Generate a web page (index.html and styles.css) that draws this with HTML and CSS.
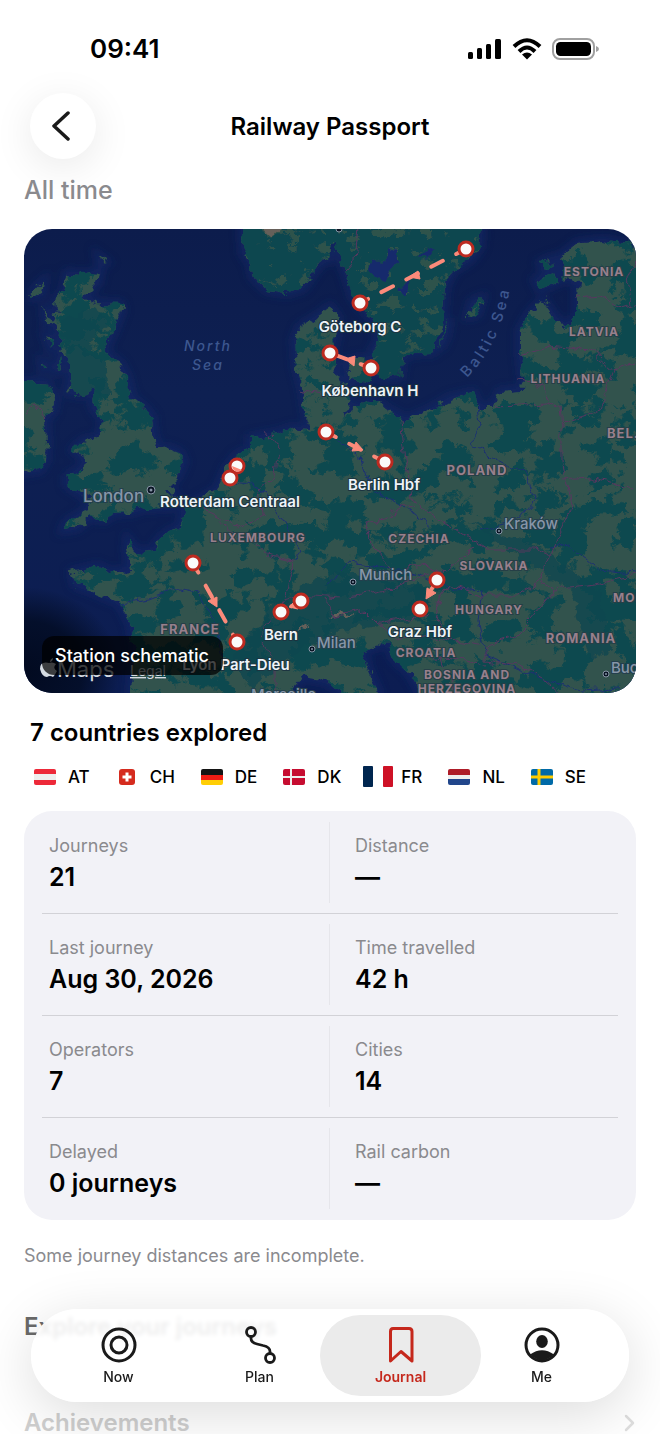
FILE: index.html
```html
<!DOCTYPE html>
<html lang="en">
<head>
<meta charset="utf-8">
<meta name="viewport" content="width=device-width, initial-scale=1">
<title>Railway Passport</title>
<link rel="stylesheet" href="styles.css">
</head>
<body>
<div class="status-bar">
  <time class="clock">09:41</time>
  <div class="status-icons">
    <svg width="34" height="22" viewBox="0 0 34 22" role="img" aria-label="Signal"><rect x="0" y="14" width="5" height="7" rx="1.500"/><rect x="9" y="10" width="5" height="11" rx="1.500"/><rect x="18" y="6" width="5" height="15" rx="1.500"/><rect x="27" y="1" width="6" height="20" rx="1.500"/></svg>
    <svg width="30" height="22" viewBox="0 0 30 22" role="img" aria-label="Wi-Fi"><g fill="none" stroke="#000" stroke-width="4"><path d="M2 8.500Q15-4 28 8.500"/><path d="M7 13.500Q15 5.500 23 13.500"/></g><path d="M15 21.500L10 16.500Q15 12.500 20 16.500Z"/></svg>
    <svg width="47" height="22" viewBox="0 0 47 22" role="img" aria-label="Battery"><rect x="1" y="1" width="41" height="20" rx="7" fill="none" stroke="#a0a0a0" stroke-width="2"/><rect x="4" y="4" width="35" height="14" rx="4.500"/><path d="M44 8q3 1 3 3t-3 3z" fill="#a0a0a0"/></svg>
  </div>
</div>

<header class="header">
  <button class="back" type="button" aria-label="Back"><svg width="20" height="30" viewBox="0 0 20 30"><path d="M17 2L3 15L17 28" fill="none" stroke="#1a1a1a" stroke-width="3.500" stroke-linecap="round" stroke-linejoin="round"/></svg></button>
  <h1>Railway Passport</h1>
</header>

<main class="content">
  <p class="period">All time</p>

  <figure class="map-card">
    <svg class="map" viewBox="24 229 612 464" role="img" aria-label="Map of journeys">
      <defs>
        <linearGradient id="sea" x1="0" y1="0" x2="0" y2="1"><stop offset="0" stop-color="#0c1c4c"/><stop offset=".35" stop-color="#0e2052"/><stop offset="1" stop-color="#0c1d52"/></linearGradient>
        <radialGradient id="deep"><stop offset="0" stop-color="#020a20"/><stop offset=".6" stop-color="#040f2b"/><stop offset="1" stop-color="#040f2b" stop-opacity="0"/></radialGradient>
        <filter id="rough" x="-5%" y="-5%" width="110%" height="110%"><feTurbulence type="fractalNoise" baseFrequency=".09" numOctaves="4" seed="4"/><feDisplacementMap in="SourceGraphic" scale="13" xChannelSelector="R" yChannelSelector="G"/></filter>
        <filter id="wobble" x="-5%" y="-5%" width="110%" height="110%"><feTurbulence type="fractalNoise" baseFrequency=".07" numOctaves="3" seed="9"/><feDisplacementMap in="SourceGraphic" scale="12" xChannelSelector="R" yChannelSelector="G"/></filter>
        <filter id="woods" x="0" y="0" width="100%" height="100%" color-interpolation-filters="sRGB"><feTurbulence type="fractalNoise" baseFrequency=".034 .042" numOctaves="5" seed="12"/><feColorMatrix values="0 0 0 0 .05  0 0 0 0 .29  0 0 0 0 .315  26 0 0 0 -13.2"/><feComposite in2="SourceGraphic" operator="in"/></filter>
        <filter id="fields" x="0" y="0" width="100%" height="100%" color-interpolation-filters="sRGB"><feTurbulence type="fractalNoise" baseFrequency=".05 .08" numOctaves="4" seed="31"/><feColorMatrix values="0 0 0 0 .18  0 0 0 0 .32  0 0 0 0 .3  26 0 0 0 -15.400"/><feComposite in2="SourceGraphic" operator="in"/></filter>
        <filter id="soft" x="-20%" y="-20%" width="140%" height="140%"><feGaussianBlur stdDeviation="4"/></filter>
        <path id="coast" d="M67 273L84 274L100 272L98 283L83 298L97 303L120 304L122 310L113 333L105 350L110 357L120 363L127 377L132 398L143 407L152 417L153 433L158 450L167 448L180 453L184 462L177 477L167 487L178 498L172 507L143 508L133 512L113 513L105 520L90 517L77 528L63 530L66 523L87 510L90 500L67 485L67 477L83 467L87 460L73 450L83 441L100 437L103 420L93 407L95 390L83 395L67 392L70 380L70 363L60 353L62 337L52 323L57 313L55 300L63 293Z
          M10 383L24 383L37 382L47 383L55 400L53 412L45 420L47 440L46 460L40 470L24 472L10 475Z
          M34 290L44 281L42 294L33 297ZM44 305L48 318L54 322L46 322ZM98 256L106 262L100 264ZM46 336L54 340L50 348ZM42 362L47 366L43 369ZM58 358L60 370L56 372Z
          M242 215L242 235L243 253L250 263L253 277L267 290L287 293L303 288L320 263L330 260L333 240L338 253L347 277L353 297L370 317L380 337L373 350L373 363L380 378L400 377L402 360L410 353L433 352L442 327L445 287L453 270L470 260L480 247L483 215Z
          M330 307L317 317L300 327L295 340L297 367L303 390L307 417L310 430L293 428L278 433L250 438L250 450L237 455L227 467L217 490L200 500L183 510L180 527L167 533L157 542L155 550L143 552L135 550L128 540L127 550L130 570L110 572L97 566L72 572L75 585L97 593L120 603L130 623L135 647L132 673L130 710L290 710L293 688L303 677L327 682L345 695L380 710L377 690L367 667L363 650L390 642L393 657L410 673L425 700L660 710L660 220L632 245L603 240L577 243L560 257L563 277L578 283L577 293L577 317L565 327L557 320L543 300L530 313L520 330L520 353L523 380L522 390L500 392L493 407L478 407L473 393L450 398L430 410L407 420L393 413L373 400L357 407L343 417L350 400L347 387L338 377L332 353L337 330L337 317Z
          M345 362L362 358L372 368L366 382L352 380ZM535 280L554 274L558 282L540 289ZM540 263L552 258L554 266L544 270ZM468 316L472 302L482 298L477 314ZM440 349L449 318L446 336ZM340 381L350 384L346 390Z"/>
        <clipPath id="land"><use href="#coast"/></clipPath>
      </defs>
      <rect x="24" y="229" width="612" height="464" fill="url(#sea)"/>
      <use href="#coast" fill="#192c6c" stroke="#192c6c" stroke-width="8" filter="url(#soft)" opacity=".6"/>
      <ellipse cx="25" cy="672" rx="95" ry="85" fill="url(#deep)"/>
      <g filter="url(#rough)">
        <use href="#coast" fill="#30534d"/>
        <g clip-path="url(#land)">
          <rect x="14" y="219" width="632" height="484" fill="#fff" filter="url(#woods)"/>
          <path d="M235 210H490V380H372L335 300L250 300Z" fill="#114650"/>
          <path d="M235 210H490V380H372L335 300L250 300Z" filter="url(#fields)"/>
          <path d="M62 320L95 305L105 325L85 350L105 365L110 395L70 395ZM305 585L340 570L430 588L420 620L340 630L300 650L250 690L230 660L270 610ZM470 520L545 550L600 590L612 650L590 660L570 590L500 545Z" fill="#104750" opacity=".75"/>
          <path d="M330 615L355 612L342 618ZM298 630L312 624L306 632ZM258 226L282 226L270 237Z" fill="#66615a"/>
        </g>
        <path d="M368 272L378 260L393 250L398 262L386 280L373 277ZM398 290L412 272L405 295ZM420 255L432 250L425 260Z" fill="#192c6c"/>
      </g>
      <g class="rivers" filter="url(#wobble)"><path d="M118 604L150 600L180 588L200 595L215 625L222 655"/><path d="M230 478L265 490L285 522L300 550L296 560"/><path d="M325 585L350 562L392 568L425 578L455 590L482 588L478 620L485 655L520 670L545 680"/><path d="M326 432L362 460L372 490L398 505L426 520L428 528"/><path d="M478 405L480 425L470 445L500 462L525 470L535 500L520 520L482 530"/><path d="M550 548L570 545L600 570L636 573"/><path d="M545 680L580 690L620 688"/></g>
      <g class="borders" filter="url(#wobble)"><path d="M358 228L355 260L348 268"/><path d="M300 392L325 397"/><path d="M268 432L278 445L275 475L258 490L262 515L245 528L205 510"/><path d="M218 520L232 532L258 545L265 555L295 560L285 600L302 595L340 598"/><path d="M400 422L405 450L412 500L440 520L472 540L485 548L535 548L550 555L562 530L572 505L562 460L562 425L560 410L548 405L495 407"/><path d="M412 505L366 523L372 548L395 572L425 565L445 572L475 550"/><path d="M517 380L545 385L550 405M520 355L550 345L590 350L615 370L635 362M578 297L600 295L620 310L636 305M615 370L600 410L562 423M636 260L628 280L632 305"/><path d="M562 480L590 478L636 490"/><path d="M550 555L540 580L515 595L480 595L450 585L440 600L435 620L450 640L480 645M540 582L555 590L595 585L636 575M555 590L530 620L515 635L485 645L485 660L520 665L545 680L560 693"/><path d="M350 597L380 592L430 575M325 600L335 615L365 610L380 625L430 615M260 635L275 615L285 600M262 640L275 660L275 693M380 625L400 640L430 635L450 640M420 655L460 660L485 665M440 655L455 693"/><path d="M24 415L35 405L45 417"/></g>
      <g class="sea-label"><text x="208" y="351">North</text><text x="208" y="370">Sea</text><path id="baltic" d="M467 378Q507 338 513 264" fill="none"/><text class="baltic"><textPath href="#baltic">Baltic Sea</textPath></text></g>
      <g class="country"><text x="594" y="276">ESTONIA</text><text x="594" y="336">LATVIA</text><text x="568" y="383">LITHUANIA</text><text x="607" y="438" class="start large">BEL.</text><text x="477" y="475" class="large">POLAND</text><text x="419" y="543">CZECHIA</text><text x="494" y="570">SLOVAKIA</text><text x="489" y="614">HUNGARY</text><text x="613" y="602" class="start">MOLDOVA</text><text x="581" y="643" class="large">ROMANIA</text><text x="258" y="542">LUXEMBOURG</text><text x="190" y="634" class="large">FRANCE</text><text x="426" y="657">CROATIA</text><text x="467" y="679">BOSNIA AND</text><text x="467" y="693">HERZEGOVINA</text></g>
      <g class="city"><text x="83" y="502" class="capital">London</text><text x="504" y="529">Kraków</text><text x="359" y="580">Munich</text><text x="317" y="648">Milan</text><text x="611" y="673">Bucharest</text><text x="251" y="700">Marseille</text></g>
      <g fill="#0a1424" stroke="#8795a6" stroke-width="1"><circle cx="151" cy="490" r="4"/><circle cx="499" cy="531" r="3"/><circle cx="353" cy="582" r="3"/><circle cx="312" cy="649" r="3"/><circle cx="606" cy="674" r="3"/><circle cx="339" cy="229" r="3"/></g>
      <g fill="#8795a6"><circle cx="151" cy="490" r="1.500"/><circle cx="499" cy="531" r="1"/><circle cx="353" cy="582" r="1"/><circle cx="312" cy="649" r="1"/><circle cx="606" cy="674" r="1"/></g>
      <g class="routes"><path d="M466 249L360 303"/><path d="M371 368L330 353"/><path d="M326 432L385 462"/><path d="M237 466L230 478"/><path d="M193 563L237 642"/><path d="M301 601L281 612"/><path d="M437 580L425 600"/></g>
      <g class="arrows"><path d="M409 277L418 271L420 279Z"/><path d="M345 359L355 356L354 366Z"/><path d="M363 450L352 451L356 442Z"/><path d="M217 607L208 601L217 597Z"/><path d="M289 607L296 600L298 609Z"/><path d="M426 599L427 588L436 593Z"/></g>
      <g class="stops"><circle cx="466" cy="249" r="7"/><circle cx="360" cy="303" r="7"/><circle cx="371" cy="368" r="7"/><circle cx="330" cy="353" r="7"/><circle cx="326" cy="432" r="7"/><circle cx="385" cy="462" r="7"/><circle cx="237" cy="466" r="7"/><path d="M232 466L242 470Q239 473 235 471Q232 469 232 466Z" class="overlap"/><circle cx="230" cy="478" r="7"/><circle cx="193" cy="563" r="7"/><circle cx="237" cy="642" r="7"/><circle cx="301" cy="601" r="7"/><circle cx="281" cy="612" r="7"/><circle cx="437" cy="580" r="7"/><circle cx="420" cy="609" r="7"/></g>
      <g class="station"><text x="360" y="332">Göteborg C</text><text x="370" y="396">København H</text><text x="384" y="490">Berlin Hbf</text><text x="230" y="507">Rotterdam Centraal</text><text x="281" y="640">Bern</text><text x="420" y="637">Graz Hbf</text><text x="236" y="670">Lyon Part-Dieu</text></g>
      <g class="attribution"><path d="M50 662Q50 659 53 658Q53 661 50 662ZM54 663Q52 662 49 663Q40 661 40 669Q42 677 47 677Q50 675 53 677Q55 675 57 671Q52 668 56 664Z"/><text x="57" y="677">Maps</text><text class="legal" x="130" y="676">Legal</text></g>
    </svg>
    <figcaption>Station schematic</figcaption>
  </figure>

  <h2>7 countries explored</h2>
  <ul class="countries">
    <li><svg width="30" height="22" viewBox="0 0 30 22"><g clip-path="url(#flag)"><path fill="#ed2939" d="M4 3h22v16H4z"/><path fill="#eee" d="M4 8h22v6H4z"/></g><clipPath id="flag"><rect x="4" y="3" width="22" height="16" rx="2"/></clipPath></svg>AT</li>
    <li><svg width="30" height="22" viewBox="0 0 30 22"><rect x="7" y="3" width="16" height="16" rx="3" fill="#d52b1e"/><path d="M15 6.500v9M10.500 11h9" stroke="#fff" stroke-width="3"/></svg>CH</li>
    <li><svg width="30" height="22" viewBox="0 0 30 22"><g clip-path="url(#flag)"><path fill="#141414" d="M4 3h22v6H4z"/><path fill="#f01c14" d="M4 9h22v5H4z"/><path fill="#ffce05" d="M4 14h22v5H4z"/></g></svg>DE</li>
    <li><svg width="30" height="22" viewBox="0 0 30 22"><g clip-path="url(#flag)"><path fill="#c60c30" d="M4 3h22v16H4z"/><path stroke="#eee" stroke-width="2" d="M12 3v16M4 11h22"/></g></svg>DK</li>
    <li><svg width="30" height="22" viewBox="0 0 30 22"><rect width="10" height="21" rx="1" fill="#00264f"/><rect x="20" width="10" height="21" rx="1" fill="#ce1126"/></svg>FR</li>
    <li><svg width="30" height="22" viewBox="0 0 30 22"><g clip-path="url(#flag)"><path fill="#ae1c28" d="M4 3h22v6H4z"/><path fill="#eee" d="M4 9h22v5H4z"/><path fill="#21468b" d="M4 13h22v6H4z"/></g></svg>NL</li>
    <li><svg width="30" height="22" viewBox="0 0 30 22"><g clip-path="url(#flag)"><path fill="#006aa7" d="M4 3h22v16H4z"/><path stroke="#fecc00" stroke-width="3" d="M12 3v16M4 11h22"/></g></svg>SE</li>
  </ul>

  <dl class="stats">
    <div class="stat"><dt>Journeys</dt><dd>21</dd></div>
    <div class="stat"><dt>Distance</dt><dd>—</dd></div>
    <div class="stat"><dt>Last journey</dt><dd>Aug 30, 2026</dd></div>
    <div class="stat"><dt>Time travelled</dt><dd>42 h</dd></div>
    <div class="stat"><dt>Operators</dt><dd>7</dd></div>
    <div class="stat"><dt>Cities</dt><dd>14</dd></div>
    <div class="stat"><dt>Delayed</dt><dd>0 journeys</dd></div>
    <div class="stat"><dt>Rail carbon</dt><dd>—</dd></div>
  </dl>

  <p class="note">Some journey distances are incomplete.</p>
  <h2 class="explore">Explore your journeys</h2>
  <a class="achievements" href="#achievements">Achievements<svg width="12" height="18" viewBox="0 0 12 18"><path d="M2 2L9 9L2 16" fill="none" stroke="#dedede" stroke-width="2.500" stroke-linecap="round" stroke-linejoin="round"/></svg></a>
</main>

<nav class="tab-bar" aria-label="Main">
  <a class="tab" href="#now"><svg width="38" height="38" viewBox="0 0 38 38"><g fill="none" stroke="currentColor" stroke-width="3"><circle cx="19" cy="19" r="16"/><circle cx="19" cy="19" r="8"/></g></svg>Now</a>
  <a class="tab" href="#plan"><svg width="38" height="38" viewBox="0 0 38 38"><g fill="none" stroke="currentColor" stroke-width="2.800"><circle cx="10" cy="6" r="4.500"/><circle cx="29" cy="32" r="4.500"/><path d="M10 10.500v2q0 4 6 5.500l6 1.500q7 1.500 7 6v2"/></g></svg>Plan</a>
  <a class="tab active" href="#journal" aria-current="page"><svg width="38" height="38" viewBox="0 0 38 38"><path d="M11 2.500H27Q30 2.500 30 5.500V35L19 25.500L8.500 35V5.500Q8.500 2.500 11 2.500Z" fill="none" stroke="currentColor" stroke-width="3" stroke-linejoin="round"/></svg>Journal</a>
  <a class="tab" href="#me"><svg width="38" height="38" viewBox="0 0 38 38"><circle cx="19" cy="19" r="16" fill="none" stroke="currentColor" stroke-width="3"/><ellipse cx="19" cy="15.500" rx="5.800" ry="6.500" fill="currentColor"/><path d="M7 28.500Q19 20 31 28.500Q19 40 7 28.500Z" fill="currentColor"/></svg>Me</a>
</nav>
</body>
</html>
```

FILE: styles.css
```css
* { box-sizing: border-box; }

body {
  margin: 0;
  background: #fff;
  color: #000;
  font-family: Inter, "Liberation Sans", sans-serif;
}

h1, h2, p, ul, dl, dd, figure { margin: 0; padding: 0; }

a { color: inherit; text-decoration: none; }

svg { display: block; }

.status-bar {
  display: flex;
  justify-content: space-between;
  align-items: center;
  height: 97px;
  padding: 0 61px 0 90px;
}

.clock { font-size: 26px; font-weight: 600; }

.status-icons { display: flex; gap: 10px; }

.header {
  display: grid;
  grid-template-columns: 66px 1fr 66px;
  align-items: center;
  padding: 0 30px;
  margin-top: -4px;
}

.header h1 {
  font-size: 24px;
  font-weight: 600;
  text-align: center;
}

.back {
  display: grid;
  place-items: center;
  width: 66px;
  height: 66px;
  padding: 0 4px 0 0;
  border: 0;
  border-radius: 50%;
  background: #fff;
  box-shadow: 0 8px 40px rgba(0, 0, 0, .09);
}

.content { padding: 0 24px; }

.period {
  margin: 16px 0 24px;
  color: #8a8a8e;
  font-size: 25px;
  font-weight: 500;
  line-height: 30px;
}

.map-card {
  position: relative;
  overflow: hidden;
  border-radius: 28px;
}

.map { width: 100%; height: auto; }

.map text { text-anchor: middle; paint-order: stroke; }

.rivers path { fill: none; stroke: #1c3072; stroke-width: 1; }

.borders path { fill: none; stroke: #57385f; stroke-width: 1; }

.sea-label text { fill: #3d578f; font-size: 14px; font-style: italic; font-weight: 500; letter-spacing: 2px; }

.sea-label .baltic { font-size: 15px; font-style: normal; text-anchor: start; letter-spacing: 3px; }

.country text { fill: #98808c; stroke: #263f47; stroke-width: 2px; font-size: 12px; font-weight: 700; letter-spacing: 1px; }

.country .large { font-size: 13px; }

.country .start { text-anchor: start; }

.city text { fill: #8796a8; stroke: #243f4d; stroke-width: 2px; font-size: 15px; font-weight: 500; text-anchor: start; }

.city .capital { font-size: 17px; }

.routes path { fill: none; stroke: #fb8a7a; stroke-width: 4; stroke-linecap: round; stroke-dasharray: 13 15; stroke-dashoffset: 2; }

.arrows path { fill: #fb8a7a; stroke: #fb8a7a; stroke-width: 1; }

.stops circle { fill: #fafafa; stroke: #bd2a20; stroke-width: 3; }

.overlap { fill: #fb8a7a; }

.station text { fill: #eef3f8; stroke: #1c3440; stroke-width: 2px; font-size: 15px; font-weight: 600; }

.attribution { fill: #d5dbe2; }

.attribution text { font-size: 22px; text-anchor: start; }

.attribution .legal { font-size: 14px; text-decoration: underline; }

figcaption {
  position: absolute;
  left: 18px;
  bottom: 18px;
  padding: 0 14px 0 13px;
  border-radius: 12px;
  background: rgba(0, 0, 0, .72);
  color: #fff;
  font-size: 18px;
  font-weight: 500;
  line-height: 39px;
}

h2 {
  font-size: 24px;
  font-weight: 600;
  line-height: 32px;
}

.map-card + h2 { margin: 24px 6px 17px; }

.countries {
  display: flex;
  gap: 22px;
  padding: 0 6px;
  list-style: none;
  font-size: 17px;
  font-weight: 500;
  line-height: 22px;
}

.countries li { display: flex; gap: 8px; }

.stats {
  display: grid;
  grid-template-columns: 1fr 1fr;
  margin-top: 23px;
  padding: 1px 18px;
  border-radius: 28px;
  background: #f2f2f7;
}

.stat {
  position: relative;
  padding: 22px 7px 20px;
  border-bottom: 1px solid #d2d2d7;
}

.stat:nth-child(even) { padding-left: 25px; }

.stat:nth-last-child(-n+2) { border-bottom: 0; }

.stat:nth-child(odd)::after {
  content: "";
  position: absolute;
  top: 10px;
  right: 0;
  bottom: 10px;
  width: 1px;
  background: #e6e6eb;
}

dt {
  color: #8a8a8e;
  font-size: 18px;
  line-height: 24px;
}

dd {
  margin-top: 3px;
  font-size: 25px;
  font-weight: 600;
  line-height: 32px;
}

.note {
  margin-top: 24px;
  color: #8a8a8e;
  font-size: 18px;
  line-height: 24px;
}

.explore { margin-top: 43px; color: #6a6a6a; }

.achievements {
  display: flex;
  justify-content: space-between;
  align-items: center;
  margin-top: 68px;
  color: #cfcfcf;
  font-size: 24px;
  font-weight: 600;
  line-height: 24px;
}

.tab-bar {
  position: fixed;
  right: 31px;
  bottom: 32px;
  left: 31px;
  display: grid;
  grid-template-columns: repeat(4, 1fr);
  padding: 6px 17px;
  border-radius: 47px;
  background: rgba(255, 255, 255, .88);
  box-shadow: 0 12px 56px rgba(0, 0, 0, .14);
  backdrop-filter: blur(2px);
}

.tab {
  display: flex;
  flex-direction: column;
  align-items: center;
  gap: 2px;
  height: 81px;
  margin: 0 -10px;
  padding-top: 11px;
  border-radius: 41px;
  color: #1a1a1a;
  font-size: 14px;
  font-weight: 500;
  line-height: 22px;
}

.tab.active { background: #ebebeb; color: #c5281c; font-weight: 600; }
```
